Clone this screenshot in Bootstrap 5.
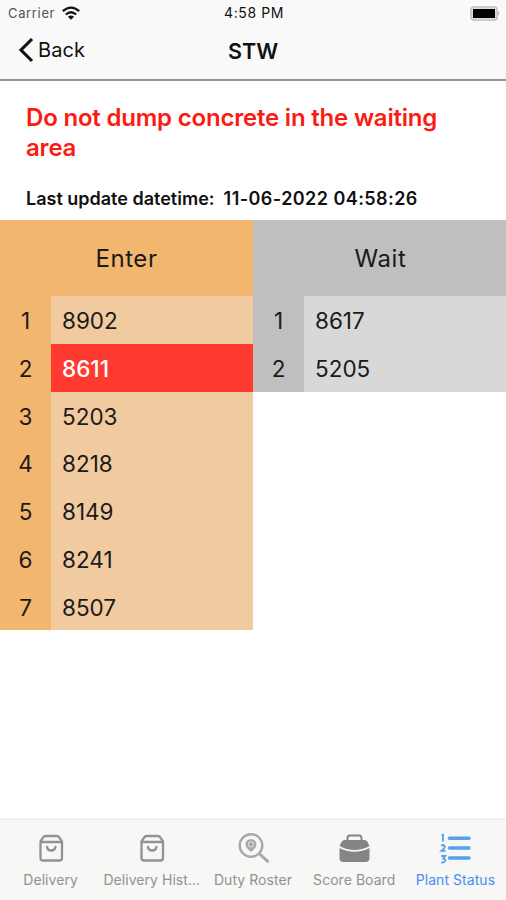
<!DOCTYPE html>
<html lang="en">
<head>
<meta charset="utf-8">
<meta name="viewport" content="width=device-width, initial-scale=1">
<title>STW</title>
<link href="https://cdn.jsdelivr.net/npm/bootstrap@5.3.0/dist/css/bootstrap.min.css" rel="stylesheet">
<style>
body{font-family:Inter,"Liberation Sans",sans-serif;color:#111;height:900px;overflow:hidden}
.top-area{height:81px;background:#f9f9f9;border-bottom:2px solid #949494}
.status-line{height:26px;font-size:13px;line-height:26px;padding:0 6px 0 8px}
.status-line .carrier{color:#555;letter-spacing:.65px;margin-right:6px}
.status-line .clock{font-size:14px;font-weight:400;letter-spacing:.6px}
.title-line{height:48px}
.back-link{color:#111;font-size:20px;letter-spacing:.1px;padding-left:17px}
.page-title{font-size:21.5px;font-weight:600;padding-top:2px}
.side{flex:1 1 0}
.notice{height:139.4px;padding:22px 26px 0}
.notice h1{font-size:24px;line-height:30px;font-weight:600;color:#fb1b12;margin:0 0 26px;letter-spacing:-.2px}
.notice p{font-size:18px;line-height:20px;font-weight:600;margin:0;white-space:pre}
.notice time{letter-spacing:.44px}
.queue{color:#1c1a18}
.queue h2{height:76px;line-height:78px;font-size:24px;font-weight:400;margin:0;letter-spacing:.55px}
.queue-wait h2{padding-left:2px}
.queue-enter{background:#f3b66f}
.queue-wait{background:#bfbfbf}
.slot{height:47.7px;line-height:49.4px;font-size:22.5px}
.slot-no{width:51px}
.slot-id{padding-left:11px}
.queue-enter .slot-id{background:#f1cb9f}
.queue-wait .slot-id{background:#d8d8d8}
.queue-enter .slot-hot{background:#ff3a30;color:#fff;font-weight:500}
.tabs{height:82px;background:#f7f7f5;border-top:2px solid #f0f0f0;color:#929292}
.tabs a{flex:1 1 0;width:20%;color:inherit;text-decoration:none;font-size:14px;padding-top:9px}
.tabs svg{height:40px;width:40px}
.tabs span{line-height:20px;margin-top:1px;white-space:nowrap;letter-spacing:.05px}
.tabs .on{color:#4a8df8}
</style>
</head>
<body class="d-flex flex-column bg-white">
<header class="top-area flex-shrink-0">
  <div class="status-line d-flex align-items-center">
    <div class="side d-flex align-items-center"><span class="carrier">Carrier</span>
      <svg width="20" height="15" viewBox="0 0 20 15" fill="none" stroke="#111" stroke-width="2.3"><path d="M1.8 5.2Q10-2 18.2 5.2M4.8 8.5Q10 4 15.2 8.5"/><path d="M10 13.8 6.9 10.8Q10 8.4 13.1 10.8Z" fill="#111" stroke="none"/></svg>
    </div>
    <span class="clock">4:58 PM</span>
    <div class="side d-flex justify-content-end">
      <svg width="30" height="15" viewBox="0 0 30 15"><rect x=".9" y=".9" width="26.2" height="13.2" rx="2.8" fill="#ddd" stroke="#bbb" stroke-width="1.3"/><rect x="3" y="3" width="22" height="9" fill="#000"/><path d="M28 5q2.500 2.500 0 5z" fill="#bbb"/></svg>
    </div>
  </div>
  <nav class="title-line d-flex align-items-center">
    <div class="side"><a class="back-link d-flex align-items-center text-decoration-none" href="#">
      <svg width="17" height="26" viewBox="0 0 17 26" fill="none" stroke="#111" stroke-width="3.1"><path d="M15 2 4 13l11 11"/></svg><span class="ms-1">Back</span></a></div>
    <span class="page-title">STW</span>
    <div class="side"></div>
  </nav>
</header>
<main class="flex-grow-1">
  <section class="notice">
    <h1>Do not dump concrete in the waiting area</h1>
    <p>Last update datetime:  <time>11-06-2022 04:58:26</time></p>
  </section>
  <div class="row g-0 align-items-start">
    <section class="queue queue-enter col-6">
      <h2 class="text-center">Enter</h2>
      <div class="slot d-flex"><div class="slot-no text-center">1</div><div class="slot-id flex-grow-1">8902</div></div>
      <div class="slot d-flex"><div class="slot-no text-center">2</div><div class="slot-id slot-hot flex-grow-1">8611</div></div>
      <div class="slot d-flex"><div class="slot-no text-center">3</div><div class="slot-id flex-grow-1">5203</div></div>
      <div class="slot d-flex"><div class="slot-no text-center">4</div><div class="slot-id flex-grow-1">8218</div></div>
      <div class="slot d-flex"><div class="slot-no text-center">5</div><div class="slot-id flex-grow-1">8149</div></div>
      <div class="slot d-flex"><div class="slot-no text-center">6</div><div class="slot-id flex-grow-1">8241</div></div>
      <div class="slot d-flex"><div class="slot-no text-center">7</div><div class="slot-id flex-grow-1">8507</div></div>
    </section>
    <section class="queue queue-wait col-6">
      <h2 class="text-center">Wait</h2>
      <div class="slot d-flex"><div class="slot-no text-center">1</div><div class="slot-id flex-grow-1">8617</div></div>
      <div class="slot d-flex"><div class="slot-no text-center">2</div><div class="slot-id flex-grow-1">5205</div></div>
    </section>
  </div>
</main>
<nav class="tabs d-flex flex-shrink-0">
  <a class="d-flex flex-column align-items-center" href="#"><svg viewBox="0 0 40 40" fill="none" stroke="currentColor" stroke-width="2.3"><path d="M9.500 12.500 12 8.700Q13 7 15 7h10.500q2 0 3 1.700L31 12.500V29q0 2.500-2.500 2.500H12q-2.500 0-2.500-2.500ZM9.500 13H31M16 18Q16.500 21.500 20.200 21.500t4.300-3.500" stroke-linecap="round"/></svg><span>Delivery</span></a>
  <a class="d-flex flex-column align-items-center" href="#"><svg viewBox="0 0 40 40" fill="none" stroke="currentColor" stroke-width="2.3"><path d="M9.500 12.500 12 8.700Q13 7 15 7h10.500q2 0 3 1.700L31 12.500V29q0 2.500-2.500 2.500H12q-2.500 0-2.500-2.500ZM9.500 13H31M16 18Q16.500 21.500 20.200 21.500t4.300-3.500" stroke-linecap="round"/></svg><span>Delivery Hist...</span></a>
  <a class="d-flex flex-column align-items-center" href="#"><svg viewBox="0 0 40 40" fill="none" stroke="#a8a8a8"><circle cx="18" cy="16.500" r="11.300" stroke-width="2.400"/><path d="m26 24.500 9.500 8.700" stroke-width="3"/><path d="M18 23Q12.500 18.500 12.500 15.500a5.500 5.500 0 0 1 11 0Q23.500 18.500 18 23Z" fill="#a8a8a8" stroke="none"/><circle cx="18" cy="15.300" r="2.700" stroke="#e4e4e4" stroke-width="1"/></svg><span>Duty Roster</span></a>
  <a class="d-flex flex-column align-items-center" href="#"><svg viewBox="0 0 40 40" fill="#858588"><path d="M13.500 12V9q0-2.500 2.500-2.500h9Q27.500 6.500 27.500 9v3" fill="none" stroke="#858588" stroke-width="2"/><path d="M10.500 11h20q2 0 3 2l2 4q-7 4-15 4t-15-4l2-4q1-2 3-2ZM5.500 19q7 3.800 15 3.800t15-3.800V29q0 4-4 4h-22q-4 0-4-4Z"/></svg><span>Score Board</span></a>
  <a class="on d-flex flex-column align-items-center" href="#"><svg viewBox="0 0 40 40" fill="none" stroke="#55a0f2"><path d="M14.500 9.200h19.500M14.500 19h19.500M14.500 29h19.500" stroke-width="3.600" stroke-linecap="round"/><path d="M6.500 6.500 8 5.700V12.500M6.300 17q1.700-1.700 3.200-.3t-3 5.100h4M6.300 27h4L8.300 29.500q2.500.5 1.800 2.500t-4 1.300" stroke-width="1.800"/></svg><span>Plant Status</span></a>
</nav>
<script src="https://cdn.jsdelivr.net/npm/bootstrap@5.3.0/dist/js/bootstrap.bundle.min.js"></script>
</body>
</html>
